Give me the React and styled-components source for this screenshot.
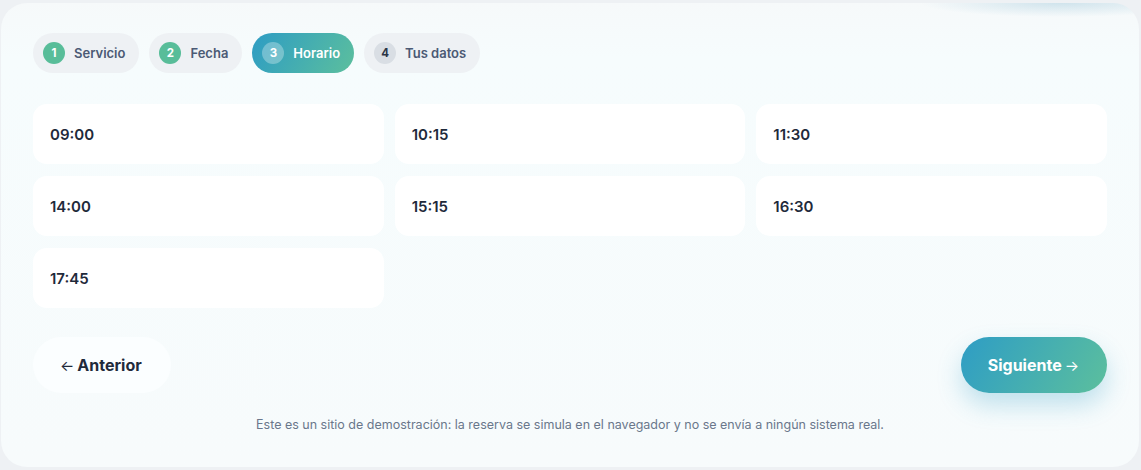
import React from "react";
import styled, { createGlobalStyle } from "styled-components";

const GlobalStyle = createGlobalStyle`
  html, body {
    margin: 0;
    padding: 0;
    background: #eef1f4;
  }
  body {
    font-family: Inter, "Noto Sans", "Liberation Sans", sans-serif;
    -webkit-font-smoothing: antialiased;
  }
`;

const Page = styled.div`
  padding: 3px 2px 3px 1px;
`;

const Card = styled.div`
  border-radius: 26px;
  background:
    radial-gradient(ellipse 140px 14px at 1060px 0px, rgba(150, 195, 215, 0.4), transparent 100%),
    linear-gradient(180deg, #f6f9fa 0%, #f6fcfd 12%, #f7fbfc 100%);
  padding: 30px 32px 34px 32px;
  display: flex;
  flex-direction: column;
  height: 464px;
  box-sizing: border-box;
`;

const Steps = styled.div`
  display: flex;
  gap: 10px;
`;

const Step = styled.div`
  display: flex;
  align-items: center;
  gap: 9px;
  height: 40px;
  padding: 0 14px 0 10px;
  border-radius: 20px;
  font-size: 13px;
  font-weight: 600;
  color: ${p => (p.$active ? "#ffffff" : "#4b5a74")};
  background: ${p =>
    p.$active ? "linear-gradient(120deg, #2d9cc4 0%, #5cbf9d 100%)" : "#eef1f4"};
`;

const Num = styled.span`
  width: 22px;
  height: 22px;
  border-radius: 50%;
  display: flex;
  align-items: center;
  justify-content: center;
  font-size: 11.5px;
  font-weight: 700;
  color: ${p => (p.$state === "todo" ? "#2b3547" : "#ffffff")};
  background: ${p =>
    p.$state === "done"
      ? "#58bd99"
      : p.$state === "active"
      ? "rgba(255,255,255,0.3)"
      : "#d9dee4"};
`;

const Slots = styled.div`
  display: grid;
  grid-template-columns: repeat(3, 1fr);
  column-gap: 11px;
  row-gap: 12px;
  margin-top: 31px;
`;

const Slot = styled.button`
  height: 60px;
  border: none;
  border-radius: 14px;
  background: #ffffff;
  text-align: left;
  padding: 0 17px;
  font-family: inherit;
  font-size: 15px;
  font-weight: 600;
  color: #1f2a3b;
`;

const Actions = styled.div`
  display: flex;
  justify-content: space-between;
  margin-top: 29px;
`;

const NavButton = styled.button`
  height: 56px;
  border: none;
  border-radius: 28px;
  font-family: inherit;
  font-size: 16px;
  font-weight: 700;
  display: flex;
  align-items: center;
  gap: 3px;
  padding: ${p => (p.$primary ? "0 28px 0 27px" : "0 29px 0 27px")};
  color: ${p => (p.$primary ? "#ffffff" : "#1f2a3b")};
  background: ${p =>
    p.$primary ? "linear-gradient(120deg, #2e9dc5 0%, #5cbf9d 100%)" : "#fbfeff"};
  box-shadow: ${p =>
    p.$primary ? "0 12px 24px rgba(46, 157, 197, 0.28)" : "none"};
`;

const Arrow = styled.span`
  font-weight: 400;
  font-size: 15px;
`;

const Note = styled.p`
  margin: 24px 0 0;
  text-align: center;
  font-size: 12.5px;
  color: #6a778b;
`;

const steps = [
  { n: 1, label: "Servicio", state: "done" },
  { n: 2, label: "Fecha", state: "done" },
  { n: 3, label: "Horario", state: "active" },
  { n: 4, label: "Tus datos", state: "todo" }
];

const times = ["09:00", "10:15", "11:30", "14:00", "15:15", "16:30", "17:45"];

export default function App() {
  return (
    <Page>
      <GlobalStyle />
      <Card>
        <Steps>
          {steps.map(s => (
            <Step key={s.n} $active={s.state === "active"}>
              <Num $state={s.state}>{s.n}</Num>
              {s.label}
            </Step>
          ))}
        </Steps>
        <Slots>
          {times.map(t => (
            <Slot key={t}>{t}</Slot>
          ))}
        </Slots>
        <Actions>
          <NavButton>
            <Arrow>←</Arrow>Anterior
          </NavButton>
          <NavButton $primary>
            Siguiente<Arrow>→</Arrow>
          </NavButton>
        </Actions>
        <Note>
          Este es un sitio de demostración: la reserva se simula en el navegador y no se envía a
          ningún sistema real.
        </Note>
      </Card>
    </Page>
  );
}
